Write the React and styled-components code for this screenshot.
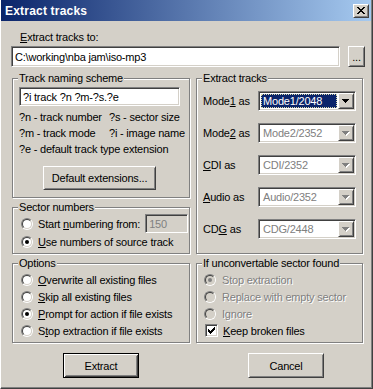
import React from 'react';
import styled, { createGlobalStyle, css } from 'styled-components';

const FACE = '#d4d0c8';
const SHADOW = '#808080';
const DARK = '#404040';
const LIGHT = '#ffffff';

const GlobalStyle = createGlobalStyle`
  html, body {
    margin: 0;
    padding: 0;
    background: ${FACE};
  }
  body {
    font-family: "Liberation Sans", Arial, sans-serif;
    font-size: 11px;
    letter-spacing: -0.2px;
    color: #000;
  }
`;

const raised = css`
  border: 1px solid;
  border-color: ${LIGHT} ${DARK} ${DARK} ${LIGHT};
  box-shadow: inset 1px 1px 0 ${FACE}, inset -1px -1px 0 ${SHADOW};
`;

const sunken = css`
  border: 1px solid;
  border-color: ${SHADOW} ${LIGHT} ${LIGHT} ${SHADOW};
  box-shadow: inset 1px 1px 0 ${DARK}, inset -1px -1px 0 ${FACE};
`;

const disabledText = css`
  color: ${SHADOW};
  text-shadow: 1px 1px 0 ${LIGHT};
`;

const Window = styled.div`
  width: 373px;
  height: 389px;
  box-sizing: border-box;
  background: ${FACE};
  border-left: 1px solid ${LIGHT};
  border-right: 1px solid ${DARK};
  border-bottom: 1px solid ${DARK};
  box-shadow: inset -1px -1px 0 ${SHADOW};
  padding: 0 1px 0 0;
  display: flex;
  flex-direction: column;
  overflow: hidden;
`;

const TitleBar = styled.div`
  flex: none;
  height: 21px;
  display: flex;
  align-items: center;
  justify-content: space-between;
  padding: 0 2px 0 4px;
  background: linear-gradient(to right, #0a246a, #a6caf0);
  color: #fff;
  font-weight: bold;
  font-size: 12px;
  letter-spacing: 0.2px;
`;

const CloseButton = styled.div`
  width: 16px;
  height: 14px;
  box-sizing: border-box;
  background: ${FACE};
  ${raised};
  display: flex;
  align-items: center;
  justify-content: center;
`;

const Content = styled.div`
  display: flex;
  flex-direction: column;
  padding: 0 0 0 10px;
`;

const Label = styled.div`
  line-height: 13px;
  margin: 10px 0 0 9px;
  ${p => p.$disabled && disabledText};
`;

const PathRow = styled.div`
  display: flex;
  gap: 8px;
  margin-top: 2px;
`;

const TextField = styled.input`
  box-sizing: border-box;
  width: ${p => p.$w}px;
  height: ${p => p.$h}px;
  margin: 0;
  padding: 0 0 0 3px;
  font: inherit;
  letter-spacing: inherit;
  color: ${p => (p.disabled ? SHADOW : '#000')};
  background: ${p => (p.disabled ? FACE : LIGHT)};
  outline: none;
  ${sunken};
`;

const Button = styled.button`
  box-sizing: border-box;
  width: ${p => p.$w}px;
  height: ${p => p.$h}px;
  margin: 0;
  padding: 0;
  font: inherit;
  letter-spacing: inherit;
  color: #000;
  background: ${FACE};
  ${raised};
  ${p =>
    p.$default &&
    css`
      border: 1px solid #000;
      box-shadow: inset 1px 1px 0 ${LIGHT}, inset -1px -1px 0 ${DARK},
        inset 2px 2px 0 ${FACE}, inset -2px -2px 0 ${SHADOW};
    `};
`;

const Columns = styled.div`
  display: grid;
  grid-template-columns: 178px 167px;
  column-gap: 6px;
  margin: 5px 0 0 1px;
`;

const Column = styled.div`
  display: flex;
  flex-direction: column;
  gap: 3px;
`;

const Group = styled.fieldset`
  margin: 0;
  padding: 0;
  min-width: 0;
  box-sizing: border-box;
  height: ${p => p.$h}px;
  border: 1px solid ${SHADOW};
  box-shadow: inset 1px 1px 0 ${LIGHT}, 1px 1px 0 ${LIGHT};
`;

const Legend = styled.legend`
  margin-left: 5px;
  padding: 0 1px;
  line-height: 13px;
  background: ${FACE};
`;

const GroupBody = styled.div`
  display: flex;
  flex-direction: column;
  padding: ${p => p.$pad || '0'};
`;

const Hints = styled.div`
  display: grid;
  grid-template-columns: 90px auto;
  line-height: 16px;
  margin: 3px 0 0 6px;
  white-space: nowrap;
`;

const Wide = styled.div`
  grid-column: 1 / -1;
`;

const Choice = styled.div`
  display: flex;
  align-items: center;
  gap: ${p => p.$gap || 5}px;
  height: ${p => p.$h || 17}px;
  padding-left: ${p => p.$indent}px;
  white-space: nowrap;
  ${p => p.$disabled && disabledText};
`;

const RadioOuter = styled.span`
  flex: none;
  width: 12px;
  height: 12px;
  box-sizing: border-box;
  border-radius: 50%;
  border: 1px solid;
  border-color: ${SHADOW} ${LIGHT} ${LIGHT} ${SHADOW};
  display: flex;
  text-shadow: none;
`;

const RadioInner = styled.span`
  width: 10px;
  height: 10px;
  box-sizing: border-box;
  border-radius: 50%;
  border: 1px solid;
  border-color: ${DARK} ${FACE} ${FACE} ${DARK};
  background: ${p => (p.$disabled ? FACE : LIGHT)};
  display: flex;
  align-items: center;
  justify-content: center;
`;

const RadioDot = styled.span`
  width: 4px;
  height: 4px;
  border-radius: 50%;
  background: ${p => (p.$disabled ? SHADOW : '#000')};
`;

const CheckBox = styled.span`
  flex: none;
  width: 13px;
  height: 13px;
  box-sizing: border-box;
  background: ${LIGHT};
  ${sunken};
  display: flex;
  align-items: center;
  justify-content: center;
`;

const ComboGrid = styled.div`
  display: grid;
  grid-template-columns: 55px 98px;
  row-gap: 12px;
  align-items: center;
  padding: 6px 0 0 6px;
`;

const ComboBox = styled.div`
  box-sizing: border-box;
  width: 98px;
  height: 20px;
  padding: 1px;
  display: flex;
  background: ${LIGHT};
  ${sunken};
`;

const ComboValue = styled.div`
  flex: 1;
  margin: 1px;
  padding-left: 2px;
  display: flex;
  align-items: center;
  white-space: nowrap;
  color: ${p => (p.$disabled ? SHADOW : '#000')};
  ${p =>
    p.$focused &&
    css`
      color: #fff;
      background: #0a246a;
      outline: 1px dotted #d8d8a8;
      outline-offset: -1px;
    `};
`;

const ComboArrow = styled.div`
  flex: none;
  width: 16px;
  height: 16px;
  box-sizing: border-box;
  background: ${FACE};
  ${raised};
  display: flex;
  align-items: center;
  justify-content: center;
`;

const ButtonRow = styled.div`
  display: flex;
  gap: 109px;
  margin: 10px 0 0 52px;
`;

const CloseGlyph = () => (
  <svg width="8" height="7" viewBox="0 0 8 7" shapeRendering="crispEdges">
    <path
      d="M0 0h2v1h1v1h2v-1h1v-1h2v1h-1v1h-1v1h-1v1h1v1h1v1h1v1h-2v-1h-1v-1h-2v1h-1v1h-2v-1h1v-1h1v-1h1v-1h-1v-1h-1v-1h-1z"
      fill="#000"
    />
  </svg>
);

const Arrow = ({ disabled }) => (
  <svg width="8" height="5" viewBox="0 0 8 5" shapeRendering="crispEdges">
    {disabled && (
      <path d="M1 1h7v1h-1v1h-1v1h-1v1h-1v-1h-1v-1h-1v-1h-1z" fill={LIGHT} />
    )}
    <path
      d="M0 0h7v1h-1v1h-1v1h-1v1h-1v-1h-1v-1h-1v-1h-1z"
      fill={disabled ? SHADOW : '#000'}
    />
  </svg>
);

const CheckMark = () => (
  <svg width="7" height="7" viewBox="0 0 7 7" shapeRendering="crispEdges">
    <path
      d="M6 0h1v3h-1v1h-1v1h-1v1h-1v1h-1v-1h-1v-1h-1v-3h1v1h1v1h1v-1h1v-1h1v-1h1z"
      fill="#000"
    />
  </svg>
);

const Radio = ({ checked, disabled, indent = 8, gap, children }) => (
  <Choice $indent={indent} $gap={gap} $disabled={disabled}>
    <RadioOuter>
      <RadioInner $disabled={disabled}>
        {checked && <RadioDot $disabled={disabled} />}
      </RadioInner>
    </RadioOuter>
    <span>{children}</span>
  </Choice>
);

const Combo = ({ label, value, focused, disabled }) => (
  <>
    <span>{label}</span>
    <ComboBox>
      <ComboValue $focused={focused} $disabled={disabled}>
        {value}
      </ComboValue>
      <ComboArrow>
        <Arrow disabled={disabled} />
      </ComboArrow>
    </ComboBox>
  </>
);

const App = () => (
  <>
    <GlobalStyle />
    <Window>
      <TitleBar>
        <span>Extract tracks</span>
        <CloseButton>
          <CloseGlyph />
        </CloseButton>
      </TitleBar>
      <Content>
        <Label>
          <u>E</u>xtract tracks to:
        </Label>
        <PathRow>
          <TextField $w={329} $h={21} defaultValue="C:\working\nba jam\iso-mp3" />
          <Button $w={17} $h={21}>
            ...
          </Button>
        </PathRow>

        <Columns>
          <Column>
            <Group $h={126}>
              <Legend>Track naming scheme</Legend>
              <GroupBody $pad="2px 0 0 6px">
                <TextField $w={161} $h={19} defaultValue="?i track ?n ?m-?s.?e" />
              </GroupBody>
              <Hints>
                <span>?n - track number</span>
                <span>?s - sector size</span>
                <span>?m - track mode</span>
                <span>?i - image name</span>
                <Wide>?e - default track type extension</Wide>
              </Hints>
              <GroupBody $pad="9px 0 0 30px">
                <Button $w={113} $h={24}>
                  Default extensions...
                </Button>
              </GroupBody>
            </Group>

            <Group $h={53}>
              <Legend>Sector numbers</Legend>
              <GroupBody>
                <Choice $indent={8} $h={19}>
                  <RadioOuter>
                    <RadioInner />
                  </RadioOuter>
                  <span>
                    Start <u>n</u>umbering from:
                  </span>
                  <TextField $w={43} $h={19} disabled defaultValue="150" />
                </Choice>
                <Radio checked>
                  <u>U</u>se numbers of source track
                </Radio>
              </GroupBody>
            </Group>

            <Group $h={86}>
              <Legend>Options</Legend>
              <GroupBody $pad="1px 0 0 0">
                <Radio>
                  <u>O</u>verwrite all existing files
                </Radio>
                <Radio>
                  <u>S</u>kip all existing files
                </Radio>
                <Radio checked>
                  <u>P</u>rompt for action if file exists
                </Radio>
                <Radio>
                  S<u>t</u>op extraction if file exists
                </Radio>
              </GroupBody>
            </Group>
          </Column>

          <Column>
            <Group $h={182}>
              <Legend>Extract tracks</Legend>
              <ComboGrid>
                <Combo
                  label={<>Mode<u>1</u> as</>}
                  value="Mode1/2048"
                  focused
                />
                <Combo
                  label={<>Mode<u>2</u> as</>}
                  value="Mode2/2352"
                  disabled
                />
                <Combo label={<><u>C</u>DI as</>} value="CDI/2352" disabled />
                <Combo
                  label={<><u>A</u>udio as</>}
                  value="Audio/2352"
                  disabled
                />
                <Combo label={<>CD<u>G</u> as</>} value="CDG/2448" disabled />
              </ComboGrid>
            </Group>

            <Group $h={86}>
              <Legend>If unconvertable sector found</Legend>
              <GroupBody $pad="1px 0 0 0">
                <Radio checked disabled indent={7} gap={6}>
                  Stop extraction
                </Radio>
                <Radio disabled indent={7} gap={6}>
                  Replace with empty sector
                </Radio>
                <Radio disabled indent={7} gap={6}>
                  I<u>g</u>nore
                </Radio>
                <Choice $indent={8} $gap={5}>
                  <CheckBox>
                    <CheckMark />
                  </CheckBox>
                  <span>
                    <u>K</u>eep broken files
                  </span>
                </Choice>
              </GroupBody>
            </Group>
          </Column>
        </Columns>

        <ButtonRow>
          <Button $w={76} $h={25} $default>
            Extract
          </Button>
          <Button $w={76} $h={25}>
            Cancel
          </Button>
        </ButtonRow>
      </Content>
    </Window>
  </>
);

export default App;
